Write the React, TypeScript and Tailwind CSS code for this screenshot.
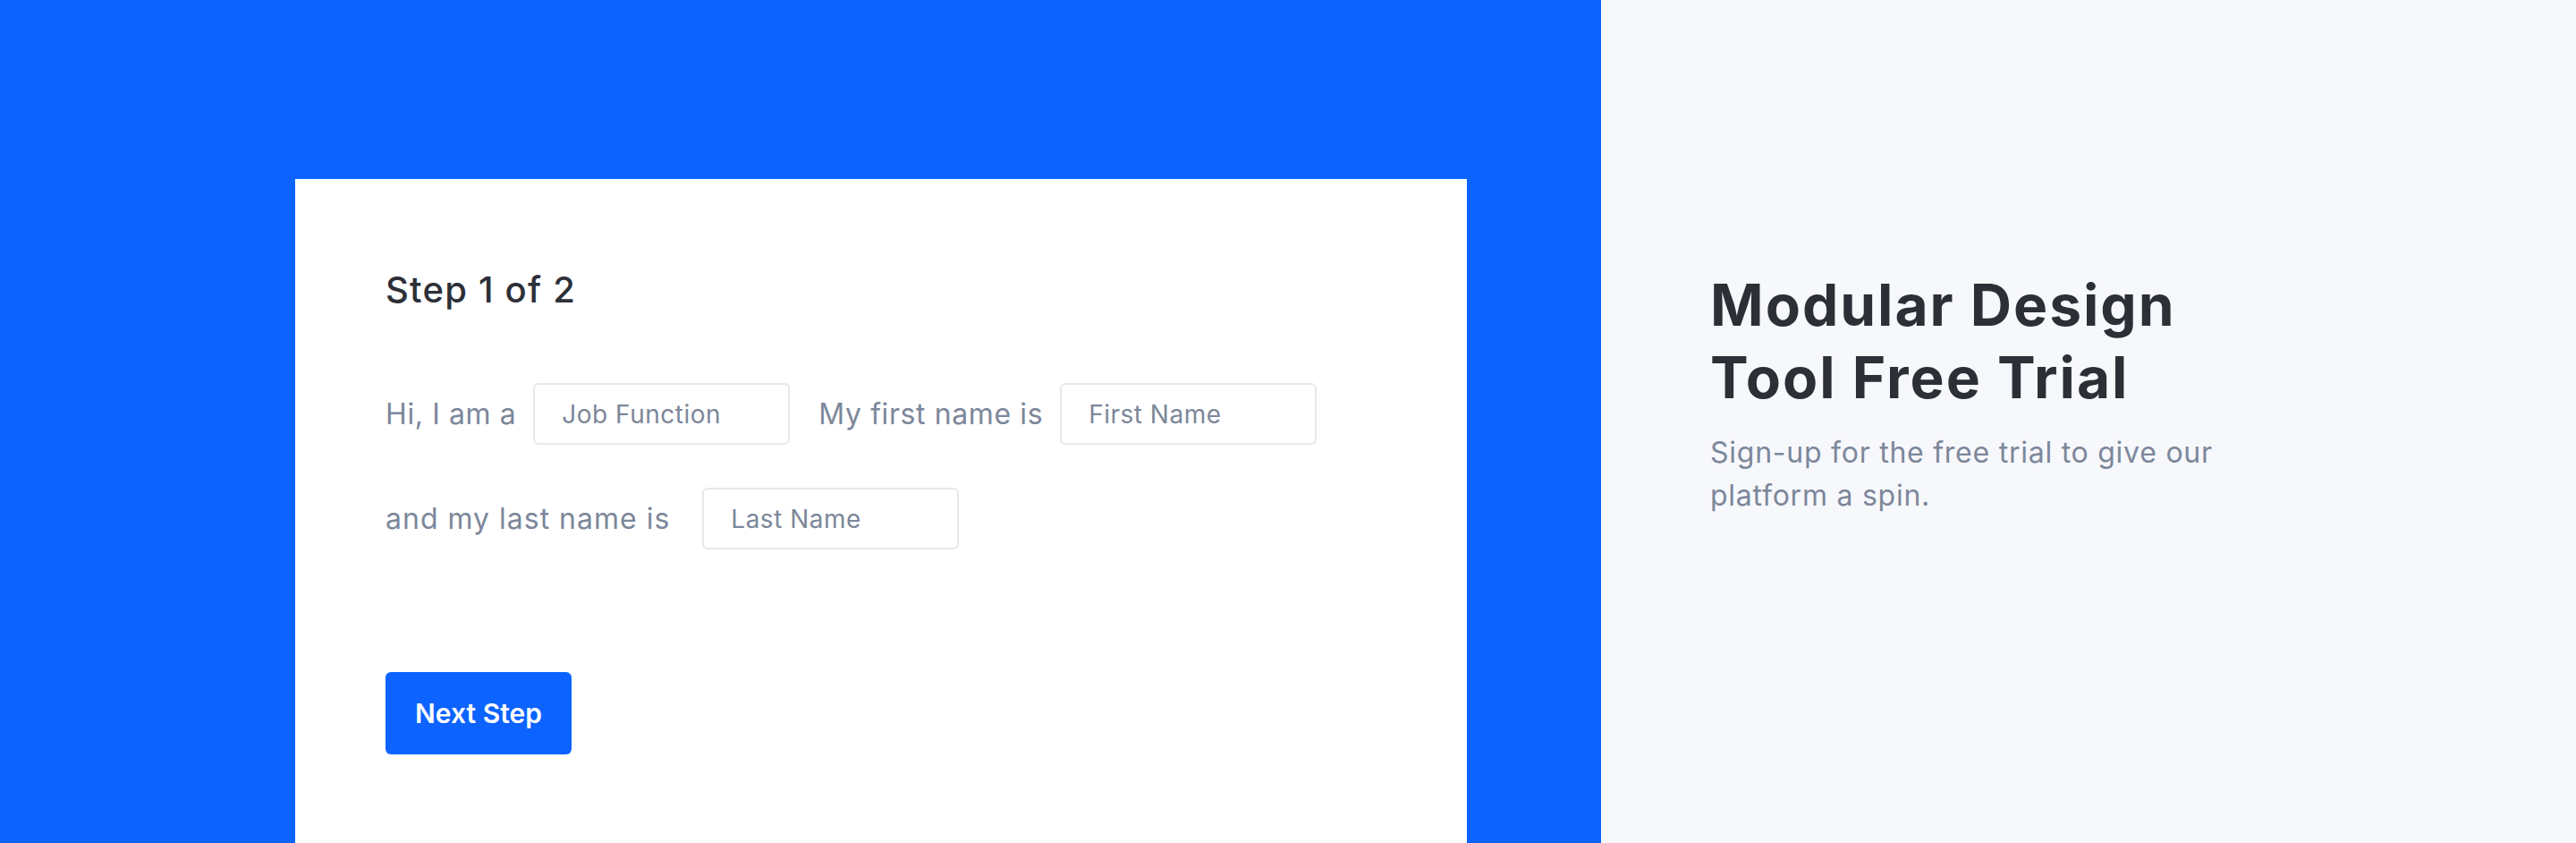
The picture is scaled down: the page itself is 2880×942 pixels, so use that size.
import React from "react";

const Field = ({ placeholder }: { placeholder: string }) => (
  <input
    type="text"
    placeholder={placeholder}
    className="w-[287px] h-[69px] px-[30px] rounded-[6px] border-2 border-[#e6e8ec] bg-white text-[28px] tracking-[0.5px] text-[#7c879a] placeholder:text-[#7c879a] outline-none"
  />
);

const App = () => {
  return (
    <div className="w-[2880px] h-[942px] overflow-hidden flex font-['Inter',sans-serif]">
      <div className="w-[1790px] h-full bg-[#0c63ff] pl-[330px] pt-[200px] shrink-0">
        <div className="w-[1310px] h-[1000px] bg-white pl-[101px] pt-[104px]">
          <h2 className="text-[40px] leading-none font-medium tracking-[1.2px] text-[#2d3038]">Step 1 of 2</h2>

          <div className="mt-[84px] flex items-center text-[32px] tracking-[0.6px] text-[#7c879a]">
            <span>Hi, I am a</span>
            <div className="ml-[19px]">
              <Field placeholder="Job Function" />
            </div>
            <span className="ml-[32px]">My first name is</span>
            <div className="ml-[19px]">
              <Field placeholder="First Name" />
            </div>
          </div>

          <div className="mt-[48px] flex items-center text-[32px] tracking-[1px] text-[#7c879a]">
            <span>and my last name is</span>
            <div className="ml-[36px]">
              <Field placeholder="Last Name" />
            </div>
          </div>

          <button className="mt-[137px] w-[208px] h-[92px] rounded-[6px] bg-[#0c63ff] text-white text-[30px] font-semibold">
            Next Step
          </button>
        </div>
      </div>

      <div className="flex-1 h-full bg-[#f7f8fc] pl-[122px] pt-[300px]">
        <h1 className="text-[64px] leading-[81px] font-bold tracking-[2px] text-[#2c2f36]">
          Modular Design
          <br />
          Tool Free Trial
        </h1>
        <p className="mt-[20px] text-[32px] leading-[48px] tracking-[0.75px] text-[#7c879a]">
          Sign-up for the free trial to give our
          <br />
          platform a spin.
        </p>
      </div>
    </div>
  );
};

export default App;
